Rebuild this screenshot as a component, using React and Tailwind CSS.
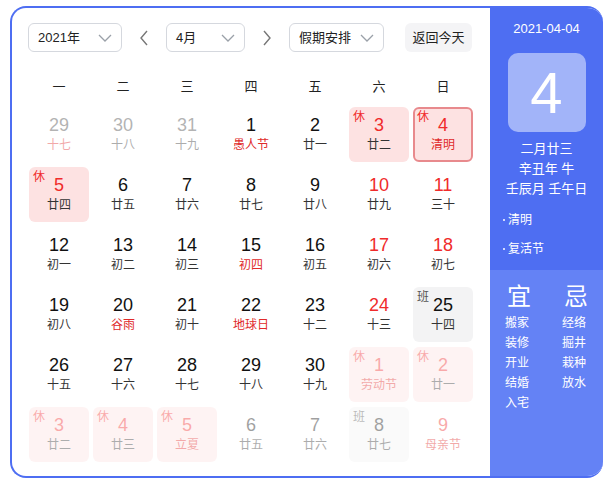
import React from "react";

const F = { fontFamily: '"Liberation Sans", "Noto Sans CJK SC", sans-serif' };

const Chevron = () => (
  <svg width="16" height="10" viewBox="0 0 16 10" fill="none" stroke="#9aa0a8" strokeWidth="1.3">
    <polyline points="2,2 8,8 14,2" />
  </svg>
);

const Arrow = ({ dir }) => (
  <svg width="10" height="16" viewBox="0 0 10 16" fill="none" stroke="#777" strokeWidth="1.4">
    {dir === "l" ? <polyline points="8,1 2,8 8,15" /> : <polyline points="2,1 8,8 2,15" />}
  </svg>
);

// type: n normal, g gray(prev month), h holiday, t today, b work, f faded next month
const rows = [
  [
    { d: 29, l: "十七", p: 1, lr: 1 },
    { d: 30, l: "十八", p: 1 },
    { d: 31, l: "十九", p: 1 },
    { d: 1, l: "愚人节", lr: 1 },
    { d: 2, l: "廿一" },
    { d: 3, l: "廿二", h: 1, r: 1 },
    { d: 4, l: "清明", h: 1, r: 1, lr: 1, t: 1 },
  ],
  [
    { d: 5, l: "廿四", h: 1, r: 1 },
    { d: 6, l: "廿五" },
    { d: 7, l: "廿六" },
    { d: 8, l: "廿七" },
    { d: 9, l: "廿八" },
    { d: 10, l: "廿九", r: 1 },
    { d: 11, l: "三十", r: 1 },
  ],
  [
    { d: 12, l: "初一" },
    { d: 13, l: "初二" },
    { d: 14, l: "初三" },
    { d: 15, l: "初四", lr: 1 },
    { d: 16, l: "初五" },
    { d: 17, l: "初六", r: 1 },
    { d: 18, l: "初七", r: 1 },
  ],
  [
    { d: 19, l: "初八" },
    { d: 20, l: "谷雨", lr: 1 },
    { d: 21, l: "初十" },
    { d: 22, l: "地球日", lr: 1 },
    { d: 23, l: "十二" },
    { d: 24, l: "十三", r: 1 },
    { d: 25, l: "十四", b: 1 },
  ],
  [
    { d: 26, l: "十五" },
    { d: 27, l: "十六" },
    { d: 28, l: "十七" },
    { d: 29, l: "十八" },
    { d: 30, l: "十九" },
    { d: 1, l: "劳动节", h: 1, r: 1, lr: 1, f: 1 },
    { d: 2, l: "廿一", h: 1, r: 1, f: 1 },
  ],
  [
    { d: 3, l: "廿二", h: 1, r: 1, f: 1 },
    { d: 4, l: "廿三", h: 1, r: 1, f: 1 },
    { d: 5, l: "立夏", h: 1, r: 1, lr: 1, f: 1 },
    { d: 6, l: "廿五", f: 1 },
    { d: 7, l: "廿六", f: 1 },
    { d: 8, l: "廿七", b: 1, f: 1 },
    { d: 9, l: "母亲节", r: 1, lr: 1, f: 1 },
  ],
];

const Cell = ({ c }) => {
  let bg = "";
  if (c.h) bg = "bg-[#fde2e2]";
  if (c.b) bg = "bg-[#f3f3f4]";
  const border = c.t ? "border-2 border-[#e88a8d]" : "";
  const op = c.f || c.p ? "opacity-40" : "";
  const numColor = c.r ? "text-[#f02b2b]" : c.p ? "text-[#444]" : "text-[#111]";
  const lunColor = c.lr ? "text-[#e02a2a]" : "text-[#333]";
  return (
    <div className={`relative h-[55px] rounded-[6px] ${bg} ${border} ${op} flex flex-col items-center ${c.t ? "pt-[5px]" : "pt-[7px]"}`}>
      {(c.h || c.b) && (
        <span
          className={`absolute ${c.t ? "top-[1px] left-[2px]" : "top-[3px] left-[4px]"} text-[12px] leading-[14px] ${c.h ? "text-[#f02b2b]" : "text-[#555]"}`}
        >
          {c.h ? "休" : "班"}
        </span>
      )}
      <span className={`text-[18px] leading-[22px] ${numColor}`}>{c.d}</span>
      <span className={`text-[12px] leading-[16px] mt-[1px] ${lunColor}`}>{c.l}</span>
    </div>
  );
};

export default function App() {
  return (
    <div className="w-[606px] h-[482px] bg-white pt-[6px] pl-[10px]" style={F}>
      <div className="w-[593px] h-[472px] border-2 border-r-0 border-[#4e6ef2] rounded-[16px] flex overflow-hidden">
        {/* Left */}
        <div className="w-[478px] h-full pt-[15px] pl-[16px]">
          <div className="flex items-center h-[29px]">
            <div className="w-[94px] h-[29px] border border-[#d5d8de] rounded-[6px] flex items-center justify-between pl-[9px] pr-[8px] text-[13px] text-[#222]">
              <span>2021年</span>
              <Chevron />
            </div>
            <div className="w-[44px] flex justify-center">
              <Arrow dir="l" />
            </div>
            <div className="w-[79px] h-[29px] border border-[#d5d8de] rounded-[6px] flex items-center justify-between pl-[9px] pr-[8px] text-[13px] text-[#222]">
              <span>4月</span>
              <Chevron />
            </div>
            <div className="w-[44px] flex justify-center">
              <Arrow dir="r" />
            </div>
            <div className="w-[95px] h-[29px] border border-[#d5d8de] rounded-[6px] flex items-center justify-between pl-[9px] pr-[8px] text-[13px] text-[#222]">
              <span>假期安排</span>
              <Chevron />
            </div>
            <div className="ml-[21px] w-[67px] h-[29px] bg-[#f4f4f6] rounded-[6px] flex items-center justify-center text-[13px] text-[#222]">
              返回今天
            </div>
          </div>
          <div className="ml-[1px] w-[444px]">
            <div className="grid grid-cols-7 gap-x-[4px] mt-[22px] h-[26px] items-center">
              {["一", "二", "三", "四", "五", "六", "日"].map((w) => (
                <div key={w} className="text-center text-[13px] text-[#222]">
                  {w}
                </div>
              ))}
            </div>
            <div className="grid grid-cols-7 gap-x-[4px] gap-y-[5px] mt-[7px]">
              {rows.flat().map((c, i) => (
                <Cell key={i} c={c} />
              ))}
            </div>
          </div>
        </div>
        {/* Right */}
        <div className="w-[113px] h-full flex flex-col text-white">
          <div className="bg-[#4e6ef2] h-[262px] flex flex-col items-center pt-[12px]">
            <div className="text-[13px] leading-[18px]">2021-04-04</div>
            <div className="mt-[15px] w-[78px] h-[79px] rounded-[10px] bg-[#a2b4f9] flex items-center justify-center text-[58px] leading-none font-light">
              4
            </div>
            <div className="mt-[7px] text-[13px] leading-[20px] text-center">
              <div>二月廿三</div>
              <div>辛丑年 牛</div>
              <div>壬辰月 壬午日</div>
            </div>
            <div className="self-start pl-[13px] mt-[13px] text-[12px] leading-[16px]">
              <div className="flex items-center">
                <span className="w-[2px] h-[2px] bg-white rounded-full mr-[3px]"></span>清明
              </div>
              <div className="flex items-center mt-[13px]">
                <span className="w-[2px] h-[2px] bg-white rounded-full mr-[3px]"></span>复活节
              </div>
            </div>
          </div>
          <div className="bg-[#6482f5] flex-1 pt-[13px] pl-[15px] flex gap-[17px]">
            <div className="w-[40px]">
              <div className="text-[24px] leading-[28px] pl-[2px]">宜</div>
              <div className="mt-[2px] text-[12px] leading-[20px]">
                <div>搬家</div>
                <div>装修</div>
                <div>开业</div>
                <div>结婚</div>
                <div>入宅</div>
              </div>
            </div>
            <div className="w-[40px]">
              <div className="text-[24px] leading-[28px] pl-[2px]">忌</div>
              <div className="mt-[2px] text-[12px] leading-[20px]">
                <div>经络</div>
                <div>掘井</div>
                <div>栽种</div>
                <div>放水</div>
              </div>
            </div>
          </div>
        </div>
      </div>
    </div>
  );
}
